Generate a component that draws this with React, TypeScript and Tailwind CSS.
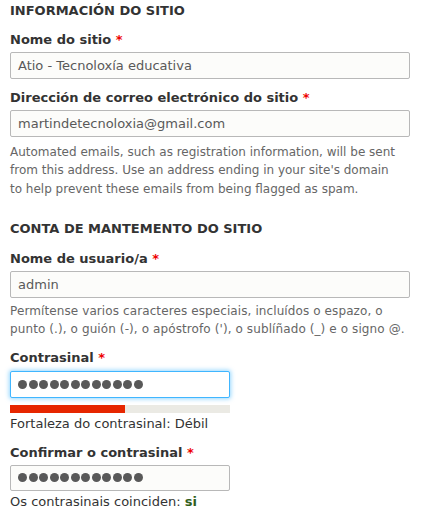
export default function App() {
  const font = { fontFamily: '"DejaVu Sans", sans-serif' }
  return (
    <div className="w-[432px] h-[523px] overflow-hidden bg-white px-[10px] pt-[2px] text-[#333]" style={font}>
      <h2 className="text-[13px] leading-[18px] font-bold uppercase text-[#333]">Información do sitio</h2>

      <Label text="Nome do sitio" className="mt-[11px]" />
      <Field value="Atio - Tecnoloxía educativa" className="mt-[3px] w-[400px]" />

      <Label text="Dirección de correo electrónico do sitio" className="mt-[10px]" />
      <Field value="martindetecnoloxia@gmail.com" className="mt-[3px] w-[400px]" />
      <p className="mt-[6px] text-[12px] leading-[18.3px] text-[#666] whitespace-nowrap">
        Automated emails, such as registration information, will be sent
        <br />
        from this address. Use an address ending in your site's domain
        <br />
        to help prevent these emails from being flagged as spam.
      </p>

      <h2 className="mt-[22px] text-[13px] leading-[18px] font-bold uppercase text-[#333]">Conta de mantemento do sitio</h2>

      <Label text="Nome de usuario/a" className="mt-[12px]" />
      <Field value="admin" className="mt-[3px] w-[400px]" />
      <p className="mt-[4px] text-[12px] leading-[18px] text-[#666] whitespace-nowrap tracking-[0.1px]">
        Permítense varios caracteres especiais, incluídos o espazo, o
        <br />
        punto (.), o guión (-), o apóstrofo ('), o sublíñado (_) e o signo @.
      </p>

      <Label text="Contrasinal" className="mt-[11px]" />
      <div className="mt-[4px] w-[220px] h-[27px] rounded-[2px] border border-[#40b6ff] bg-white shadow-[0_0_4px_1px_rgba(64,182,255,0.55)] flex items-center px-[7px]">
        <Dots />
      </div>
      <div className="mt-[7px] w-[220px] h-[8px] bg-[#ebeae4]">
        <div className="h-full w-[115px] bg-[#e62600]" />
      </div>
      <p className="mt-[2px] text-[13px] leading-[18px] text-[#333]">Fortaleza do contrasinal: Débil</p>

      <Label text="Confirmar o contrasinal" className="mt-[11px]" />
      <div className="mt-[3px] w-[220px] h-[26px] rounded-[2px] border border-[#b8b8b8] bg-[#fcfcfa] flex items-center px-[7px]">
        <Dots />
      </div>
      <p className="mt-[1px] text-[13px] leading-[20px] text-[#333]">
        Os contrasinais coinciden: <span className="font-bold text-[#325e1c]">si</span>
      </p>

      <div className="mt-[11px] w-[400px] h-[27px] rounded-[2px] border border-[#b8b8b8] bg-[#fcfcfa]" />
    </div>
  )
}

function Label({ text, className }: { text: string; className?: string }) {
  return (
    <label className={`block text-[13px] leading-[18px] font-bold text-[#333] ${className ?? ''}`}>
      {text} <span className="text-[#e00]">*</span>
    </label>
  )
}

function Field({ value, className }: { value: string; className?: string }) {
  return (
    <div className={`h-[27px] rounded-[2px] border border-[#b8b8b8] bg-[#fcfcfa] flex items-center px-[7px] text-[13px] text-[#595959] ${className ?? ''}`}>
      {value}
    </div>
  )
}

function Dots() {
  return (
    <div className="flex gap-[1.5px]">
      {Array.from({ length: 12 }).map((_, i) => (
        <span key={i} className="w-[9px] h-[9px] rounded-full bg-[#595959]" />
      ))}
    </div>
  )
}
